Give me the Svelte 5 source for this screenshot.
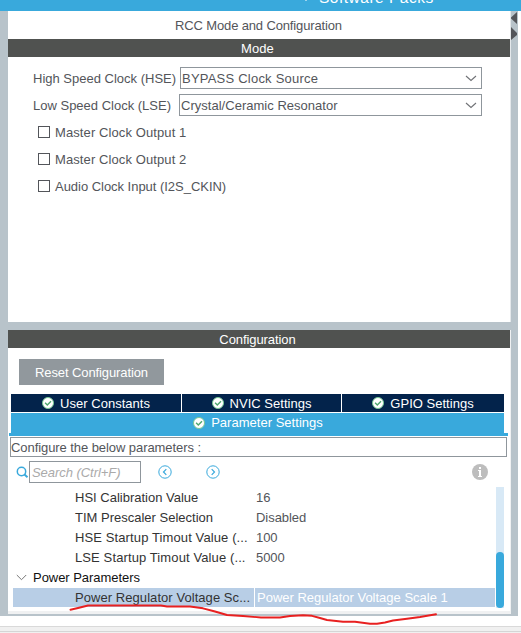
<script>
  const combos = [
    { label: 'High Speed Clock (HSE)', value: 'BYPASS Clock Source', width: 302, ls: 0.22 },
    { label: 'Low Speed Clock (LSE)', value: 'Crystal/Ceramic Resonator', width: 303, ls: 0.02 }
  ];
  const checks = [
    { name: 'Master Clock Output 1', ls: 0.1 },
    { name: 'Master Clock Output 2', ls: 0.1 },
    { name: 'Audio Clock Input (I2S_CKIN)', ls: -0.03 }
  ];
  const tabs = [
    { name: 'User Constants', width: 170 },
    { name: 'NVIC Settings', width: 159 },
    { name: 'GPIO Settings', width: 162 }
  ];
  const rows = [
    ['HSI Calibration Value', '16', 0],
    ['TIM Prescaler Selection', 'Disabled', 0],
    ['HSE Startup Timout Value (...', '100', 0.11],
    ['LSE Startup Timout Value (...', '5000', 0.11]
  ];
</script>

{#snippet check()}
  <svg class="ok" width="12" height="12" viewBox="0 0 12 12">
    <circle cx="6" cy="6" r="5.5" fill="#fff" stroke="#79c795" />
    <path d="M3.1 5.8 5.3 8 9 4.2" fill="none" stroke="#4da66d" stroke-width="1.4" />
  </svg>
{/snippet}

<div class="app">
  <header>
    <i></i><span>Software Packs</span>
  </header>
  <div class="body">
    <div class="panels">
      <section class="mode">
        <div class="title"><span>RCC Mode and Configuration</span></div>
        <div class="bar wide"><span>Mode</span></div>
        <div class="combos">
          {#each combos as c}
            <div class="combo-row">
              <span class="label">{c.label}</span>
              <div class="combo" style="width:{c.width}px">
                <span style="letter-spacing:{c.ls}px">{c.value}</span>
                <svg width="12" height="7" viewBox="0 0 12 7"><path d="M1 1 6 5.5 11 1" fill="none" stroke="#707276" stroke-width="1.1" /></svg>
              </div>
            </div>
          {/each}
        </div>
        <div class="checks">
          {#each checks as c}
            <div class="check"><i></i><span style="letter-spacing:{c.ls}px">{c.name}</span></div>
          {/each}
        </div>
      </section>
      <section class="config">
        <div class="bar"><span>Configuration</span></div>
        <button>Reset Configuration</button>
        <div class="tabs">
          {#each tabs as t}
            <div class="tab" style="width:{t.width}px">{@render check()}<span>{t.name}</span></div>
          {/each}
        </div>
        <div class="tab active">{@render check()}<span>Parameter Settings</span></div>
        <div class="rule"></div>
        <div class="hint">Configure the below parameters :</div>
        <div class="tools">
          <svg class="mag" width="13" height="13" viewBox="0 0 13 13"><circle cx="5.5" cy="5.5" r="4.2" fill="none" stroke="#39a9dc" stroke-width="1.5" /><path d="M8.5 8.5 11.5 11.3" stroke="#39a9dc" stroke-width="1.9" /></svg>
          <div class="search">Search (Ctrl+F)</div>
          <svg class="prev" width="14" height="14" viewBox="0 0 14 14" fill="none" stroke="#39a9dc"><circle cx="7" cy="7" r="6.2" /><path d="M8.3 4.2 5.5 7 8.3 9.8" stroke-width="1.2" /></svg>
          <svg class="next" width="14" height="14" viewBox="0 0 14 14" fill="none" stroke="#39a9dc"><circle cx="7" cy="7" r="6.2" /><path d="M5.7 4.2 8.5 7 5.7 9.8" stroke-width="1.2" /></svg>
          <svg class="info" width="16" height="16" viewBox="0 0 16 16"><circle cx="8" cy="8" r="8" fill="#bdbdbd" /><path d="M7 3h2v2H7zM6 6h3v6h1v1H6v-1h1V7H6z" fill="#fff" /></svg>
        </div>
        <div class="list">
          <div class="rows">
            {#each rows as [name, value, ls]}
              <div class="row"><span class="name" style="letter-spacing:{ls}px">{name}</span><span class="value">{value}</span></div>
            {/each}
            <div class="row group">
              <svg width="11" height="7" viewBox="0 0 11 7"><path d="M.8 1 5.5 5.7 10.2 1" fill="none" stroke="#777" /></svg>
              <span>Power Parameters</span>
            </div>
            <div class="row selected"><span class="name">Power Regulator Voltage Sc...</span><span class="value">Power Regulator Voltage Scale 1</span></div>
          </div>
          <div class="scroll"><i></i></div>
        </div>
      </section>
    </div>
    <div class="side">
      <svg width="7" height="32" viewBox="0 0 7 32"><path d="M6 1v12L0 7.500V6.500zM0 16l6 6v2l-6 5z" fill="#53555a" /></svg>
    </div>
  </div>
  <footer><div></div></footer>
  <svg class="mark" width="380" height="30" viewBox="65 600 380 30" fill="none" stroke="#e82020" stroke-width="1.9" stroke-linecap="round" stroke-linejoin="round">
    <path d="M70.500 609.700 78 608 88 605.500 100 605.500H161L167 606.500H190L203 608.300 215 611.500 227 615 243 616 261 617.500H280L290 616 303 615.300 312 615.800 320 618 327 620 343 621.700H355L370 623.800H377L385 622.500 393 620.500 407 618.800 420 617 436 614.300" />
  </svg>
</div>

<style>
  .app { position: relative; width: 521px; height: 633px; overflow: hidden; background: #fff; color: #53555a; font: 13px/18px "Liberation Sans", Arial, sans-serif; white-space: nowrap; display: flex; flex-direction: column; }
  .app * { box-sizing: border-box; }
  svg { display: block; flex: none; }
  header { height: 11px; background: #39a9dc; color: #fff; display: flex; align-items: flex-end; padding-left: 305px; flex: none; overflow: hidden; font-size: 15.5px; letter-spacing: 0.5px; }
  header i { width: 2px; height: 1px; background: #9bd4ee; margin: 0 12px 10px 0; }
  header span { line-height: 18px; margin-bottom: 4px; }
  .body { width: 518px; height: 605px; background: #b8c3ca; display: flex; padding-left: 8px; flex: none; }
  .panels { width: 503px; height: 603px; display: flex; flex-direction: column; gap: 8px; }
  .mode { height: 311px; background: #fff; border-right: 1px solid #e4e8eb; }
  .title { height: 28px; text-align: center; line-height: 29px; padding-right: 1px; letter-spacing: -0.14px; }
  .bar { height: 18px; background: #505250; color: #fff; text-align: center; line-height: 19px; width: 502px; padding-right: 3px; letter-spacing: -0.08px; }
  .wide { letter-spacing: 0.1px; }
  .combos { padding: 10px 28px 0 25px; display: flex; flex-direction: column; gap: 5px; }
  .combo-row { display: flex; justify-content: space-between; line-height: 23px; height: 22px; }
  .combo { border: 1px solid #8f969c; display: flex; justify-content: space-between; align-items: center; padding: 0 4px 0 1px; line-height: 21px; }
  .checks { padding: 4px 0 0 30px; }
  .check { height: 27px; display: flex; align-items: center; }
  .check i { width: 12px; height: 12px; border: 1px solid #53555a; margin: -3px 5px 0 0; }
  .check span { line-height: 20px; margin-top: -2px; }
  .config { flex: 1; background: #fff; border-right: 1px solid #f0f1f2; border-bottom: 3px solid #f0f1f2; }
  button { display: block; width: 145px; height: 26px; margin: 11px 0 9px 11px; padding: 2px 0 0; border: 0; background: #91989d; color: #fff; font: inherit; letter-spacing: -0.1px; }
  .tabs { display: flex; gap: 1px; height: 18px; margin-left: 3px; }
  .tab { background: #03234b; color: #fff; display: flex; align-items: center; justify-content: center; gap: 6px; letter-spacing: 0.02px; }
  .tab span { line-height: 20px; padding-top: 1px; }
  .active { background: #39a9dc; margin: 1px 0 0 3px; width: 493px; height: 20px; padding-left: 1px; }
  .active span { padding-top: 0; }
  .rule { height: 3px; width: 499px; margin-left: 1px; background: #39a9dc; }
  .hint { width: 497px; height: 20px; margin: 1px 0 0 2px; border: 1px solid #8f969c; line-height: 20px; letter-spacing: -0.07px; }
  .tools { height: 30px; padding: 4px 22px 0 8px; display: flex; }
  .mag { margin: 5px 0 0; }
  .search { width: 112px; height: 22px; border: 1px solid #8f969c; color: #aaa; font-style: italic; line-height: 22px; padding-left: 2px; letter-spacing: -0.05px; }
  .prev { margin: 4px 34px 0 17px; }
  .next { margin-top: 4px; }
  .info { margin: 3px 0 0 auto; }
  .list { display: flex; padding-left: 5px; }
  .rows { width: 482px; margin-right: 1px; }
  .row { height: 20px; display: flex; line-height: 21px; padding-left: 62px; }
  .name { width: 179px; color: #333; }
  .value { padding-left: 2px; letter-spacing: -0.05px; }
  .group { padding-left: 3px; color: #111; align-items: center; letter-spacing: -0.04px; }
  .group svg { margin-right: 6px; }
  .selected { height: 19px; margin-top: 1px; background: #b8cee6; line-height: 19px; }
  .selected .name { letter-spacing: 0.06px; }
  .selected .value { color: #fff; border-left: 1px solid #fff; padding-left: 2px; flex: 1; letter-spacing: 0; }
  .scroll { width: 8px; height: 121px; background: #d8e9f6; display: flex; align-items: flex-end; }
  .scroll i { width: 8px; height: 56px; border-radius: 4px; background: #39a9dc; }
  footer { padding-top: 10px; height: 17px; flex: none; }
  footer div { height: 7px; background: linear-gradient(#d9d9d9 1px, #f0f0f0 1px 5px, #d5d5d5 5px 6px, #f0f0f0 6px); }
  .mark { position: absolute; left: 65px; top: 600px; }
</style>
